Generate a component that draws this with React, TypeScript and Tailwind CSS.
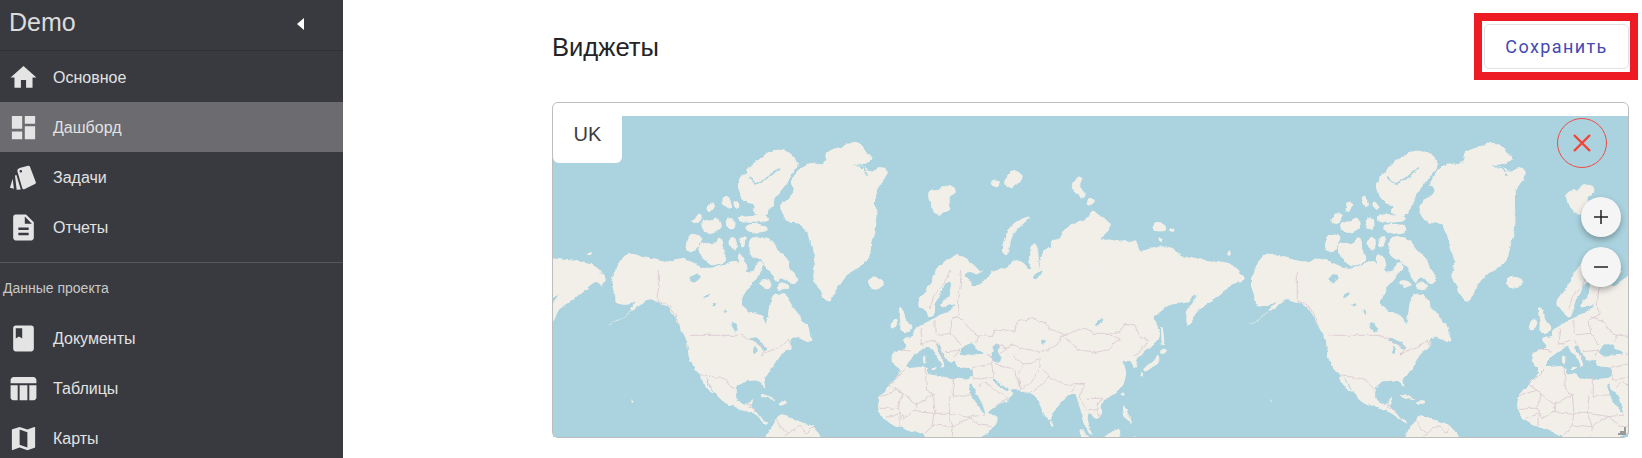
import type { ReactNode } from "react";

const LAND = "#f2efe9";
const WATER = "#aad3df";
const BORDER = "#d8c6cf";

// coastlines traced per crop, in 3x crop coordinates
const arcticAmerica = [
  "750,80 785,85 800,110 820,125 805,140 760,150 790,150 815,175 835,150 862,165 855,190 835,210 825,240 828,290 828,340 815,380 805,430 770,460 730,480 715,510 645,510 640,470 650,440 640,410 625,350 605,320 565,320 545,290 540,265 575,240 590,215 570,205 585,180 605,150 640,140 665,150 680,130 670,115 710,100",
  "520,100 560,105 585,125 600,145 575,175 550,215 520,250 510,290 490,300 455,290 470,265 440,265 420,235 412,200 430,170 440,180 440,155 490,125",
  "375,235 395,260 385,280 365,255",
  "405,255 420,270 410,280 400,265",
  "330,255 345,262 330,290 318,280",
  "295,288 310,295 300,320 272,318",
  "305,315 340,320 350,300 365,330 350,345 320,352 305,335",
  "375,305 405,305 405,340 385,340",
  "415,300 440,300 500,295 505,315 445,320 415,315",
  "435,325 495,325 500,350 440,352",
  "270,352 305,360 300,380 280,410 262,405 258,380",
  "300,380 345,385 355,365 370,375 365,400 385,435 345,450 320,440 295,405",
  "385,365 410,365 408,405 390,400",
  "420,362 443,362 430,395 420,390",
  "450,370 470,362 515,368 530,400 565,430 570,460 595,490 580,505 540,480 530,505 505,450 480,430 450,420",
  "415,405 435,430 440,470 415,460",
  "40,490 60,430 90,410 130,425 175,435 205,440 240,425 290,445 320,460 370,450 410,430 425,465 465,470 470,440 495,440 480,470 465,492 445,510 30,510",
  "0,475 15,485 5,505 0,505",
];

const northAmerica = [
  "640,0 750,0 725,30 700,70 690,98 670,85 650,40",
  "45,0 470,0 465,30 430,70 420,100 445,125 490,135 500,175 510,130 515,75 555,70 575,110 610,150 628,175 625,190 645,215 615,210 590,195 565,210 580,235 550,240 520,290 500,320 490,330 498,358 480,330 445,330 410,345 405,385 420,400 440,405 455,385 460,385 445,410 462,415 480,445 505,460 490,460 470,435 440,420 410,412 370,395 340,365 325,330 305,315 285,300 265,260 265,215 245,180 225,140 200,105 175,95 140,85 115,110 85,125 100,110 120,85 80,110 45,100 50,80 33,40",
  "303,315 312,320 330,355 342,372 325,360 310,335",
  "478,375 495,372 530,392 510,385",
  "535,395 560,395 555,403 535,402",
  "95,390 100,396 96,398",
  "500,500 530,445 545,435 570,445 600,455 640,470 662,500 662,520 500,520",
  "800,30 820,22 850,30 850,45 825,58 805,45",
  "480,30 515,35 510,55 485,50",
  "535,35 570,45 560,60 530,58",
];

const northAmericaLakes = [
  "445,205 470,205 490,225 500,235 490,245 480,220 460,215",
  "462,225 470,235 466,252 460,250",
  "265,25 295,12 300,25 280,40",
  "305,85 335,65 325,80",
  "335,105 350,100 345,110",
  "390,160 410,165 412,185 400,180",
  "375,115 382,130 376,132",
];

const northAmericaBorders = [
  "175,0 175,95 200,100 225,135 240,170",
  "270,196 420,196 445,205 490,230 495,240 483,255 520,238 550,225 565,210 575,232",
  "305,318 355,322 385,335 405,358",
  "435,405 450,400 445,415 462,415 470,430",
  "530,445 545,475 565,490 600,465 620,490 640,470",
  "550,500 565,490",
];

const arcticEurasia = [
  "143,225 175,225 190,205 230,212 225,232 200,240 213,288 195,285 175,305 150,265",
  "330,195 360,190 355,215 340,210",
  "380,180 400,160 435,180 405,215 370,210",
  "450,300 445,315 410,335 390,370 385,420 365,410 372,370 395,325 425,310",
  "590,178 605,190 600,215 620,240 600,250 575,220",
  "628,238 650,260 618,275",
  "817,320 860,325 860,345 820,345",
  "865,335 888,345 870,347",
  "835,362 850,375 840,378",
  "1040,415 1050,405 1052,420",
  "145,510 175,450 225,415 250,425 305,470 280,490 300,510",
  "300,510 320,480 390,450 405,430 440,445 450,490 460,480 445,420 460,375 475,400 475,480 490,395 520,400 515,375 545,365 545,345 600,315 625,310 640,280 660,300 690,320 690,345 650,375 700,370 745,380 770,370 775,405 790,410 840,390 880,395 900,420 940,430 990,435 1050,440 1085,470 1060,495 1050,510",
];

const eurasiaAfrica = [
  "1050,0 1090,15 1095,30 1060,40 1050,45 1000,88 965,105 950,130 920,180 915,125 958,72 945,75 915,100 870,100 840,125 810,150 838,165 840,205 800,240 770,262 765,302 755,275 735,268 718,280 720,265 740,300 733,340 700,375 670,385 660,405 668,435 645,450 625,425 620,445 630,480 640,500 610,465 605,420 590,385 575,365 530,410 505,455 490,425 475,385 455,370 420,358 385,360 403,375 375,395 345,410 318,432 358,435 340,470 305,510 140,510 135,497 60,470 20,455 -5,425 -3,380 30,345 70,300 40,285 38,245 80,240 85,225 65,205 105,200 95,185 125,165 165,145 185,135 205,125 235,100 205,105 180,115 195,85 215,30 195,35 185,70 158,105 165,120 148,148 135,120 115,110 118,85 150,50 175,0",
];

const eurasiaWater = [
  "78,290 100,258 130,240 148,228 170,262 185,285 180,300 140,295 135,285 85,290",
  "145,290 190,295 195,290 190,265 165,225 175,225 210,285 225,265 232,295 280,295 275,322 240,325 190,325 170,310 140,310",
  "240,245 255,225 290,220 280,235 320,250 290,250 250,258",
  "335,225 360,220 350,240 365,275 345,278 335,255 345,240",
  "268,335 285,365 305,400 315,430 308,425 285,395 265,350",
  "340,330 360,350 385,362 385,355 378,355 358,340 345,325",
  "250,15 275,30 275,50 300,40 340,5 320,0 290,15 270,5",
  "460,20 480,0 485,0 470,25",
  "478,210 500,212 490,222",
  "640,170 670,140 665,160",
  "190,50 215,28 205,85 185,90",
];

const eurasiaIslands = [
  "130,258 138,258 138,280 130,280",
  "155,292 175,292 165,300",
  "55,110 70,115 75,150 95,170 90,185 60,190 65,165",
  "35,150 55,145 50,175 32,178",
  "510,448 522,455 518,468 510,465",
  "730,362 735,375 725,378",
  "845,160 853,215 848,230 845,200",
  "845,235 860,240 845,255",
  "835,250 838,280 800,305 785,300 825,270",
  "780,305 790,310 785,322",
  "728,400 745,430 755,465 735,450",
  "595,470 625,500 640,515 610,515",
  "665,510 710,470 720,490 720,515",
  "765,495 775,515 760,515",
];

const eurasiaBorders = [
  "55,240 95,243",
  "125,175 120,215 135,225",
  "165,150 165,190",
  "210,150 215,190 170,195",
  "215,140 250,150 270,180 295,195 290,215",
  "215,190 240,225",
  "120,220 165,210 175,222",
  "175,222 195,270",
  "195,245 240,240 225,258",
  "245,0 240,50 235,100 238,135 210,150",
  "210,0 190,45 160,80 150,115",
  "320,250 345,265 335,280 275,295 280,330",
  "295,195 335,200 345,180 400,185 415,155 460,145 495,155 510,180 550,195",
  "345,225 385,230 395,225 430,240 470,245 505,240 530,225 550,195",
  "550,195 580,185 610,175 640,190 680,190 720,185 735,160 765,165 780,200 805,210 790,235 760,260",
  "555,200 590,235 640,250 690,235 720,210 680,190",
  "345,280 365,290 395,295 410,320 420,355",
  "395,255 430,285 415,310 420,355",
  "430,285 480,265 480,290 455,340 420,355",
  "350,255 385,230",
  "480,290 510,320 455,370",
  "510,320 555,345 590,340 610,345",
  "575,365 590,345 610,345 600,385 620,420",
  "620,385 665,385 650,410 660,440",
  "625,420 650,415",
  "280,330 340,320 335,280",
  "310,335 385,385 345,410",
  "305,340 295,350",
  "0,380 55,360 110,405",
  "75,300 30,345 60,365",
  "135,290 140,360 165,375",
  "220,315 220,378 275,378",
  "210,378 205,430 270,440 315,435",
  "110,400 160,375 165,430 205,430",
  "105,425 165,430 160,465 135,495",
  "0,415 55,415 65,365",
  "55,415 70,445 105,425 110,395",
  "20,445 60,430 60,470",
  "270,440 300,465 335,470",
  "205,430 220,470 270,440",
  "160,465 220,470 215,510",
];

function CropFrame({ x, y, children }: { x: number; y: number; children: ReactNode }) {
  return <g transform={`translate(${x} ${y}) scale(0.3333)`}>{children}</g>;
}

// rounds the traced corners so coasts don't look like polygons
function smoothPath(points: string) {
  const pts = points.split(" ").map((p) => p.split(",").map(Number));
  const mid = (a: number[], b: number[]) => `${(a[0] + b[0]) / 2} ${(a[1] + b[1]) / 2}`;
  let d = `M${mid(pts[pts.length - 1], pts[0])}`;
  pts.forEach((p, i) => {
    d += `Q${p[0]} ${p[1]} ${mid(p, pts[(i + 1) % pts.length])}`;
  });
  return d + "z";
}

function Shapes({ points, fill }: { points: string[]; fill: string }) {
  return (
    <>
      {points.map((p) => (
        <path key={p} d={smoothPath(p)} fill={fill} stroke={fill} strokeWidth={3} />
      ))}
    </>
  );
}

function Lines({ points }: { points: string[] }) {
  return (
    <>
      {points.map((p) => (
        <polyline key={p} points={p} fill="none" stroke={BORDER} strokeWidth={2.4} />
      ))}
    </>
  );
}

function WorldMap() {
  return (
    <svg viewBox="553 116 1075 321" className="block h-full w-full">
      <defs>
        <filter id="rough" filterUnits="userSpaceOnUse" x={540} y={100} width={1100} height={350}>
          <feTurbulence type="fractalNoise" baseFrequency={0.11} numOctaves={3} seed={4} result="noise" />
          <feDisplacementMap in="SourceGraphic" in2="noise" scale={5} xChannelSelector="R" yChannelSelector="G" />
          <feGaussianBlur stdDeviation={0.35} />
        </filter>
        <g id="world">
          <CropFrame x={600} y={116}>
            <Shapes points={arcticAmerica} fill={LAND} />
            <polyline points="445,185 470,205 510,180 540,155" fill="none" stroke={WATER} strokeWidth={5} />
            <polyline points="760,150 790,155 805,180" fill="none" stroke={WATER} strokeWidth={4} />
          </CropFrame>
          <CropFrame x={600} y={270}>
            <Shapes points={northAmerica} fill={LAND} />
            <Shapes points={northAmericaLakes} fill={WATER} />
            <polyline points="30,165 70,140 105,110" fill="none" stroke={LAND} strokeWidth={2} />
            <Lines points={northAmericaBorders} />
          </CropFrame>
          <CropFrame x={880} y={116}>
            <Shapes points={arcticEurasia} fill={LAND} />
          </CropFrame>
          <CropFrame x={880} y={270}>
            <Shapes points={eurasiaAfrica} fill={LAND} />
            <Shapes points={eurasiaWater} fill={WATER} />
            <Shapes points={eurasiaIslands} fill={LAND} />
            <Lines points={eurasiaBorders} />
          </CropFrame>
        </g>
      </defs>
      <g filter="url(#rough)">
        <use href="#world" x={-639} />
        <use href="#world" />
        <use href="#world" x={639} />
      </g>
    </svg>
  );
}

const iconPaths = {
  home: "M10 20v-6h4v6h5v-8h3L12 3 2 12h3v8z",
  dashboard: "M3 13h8V3H3v10zm0 8h8v-6H3v6zm10 0h8V11h-8v10zm0-18v6h8V3h-8z",
  tasks:
    "M9 4.700L15.500 2.900Q16.600 2.600 17 3.700L21.500 15.500Q21.900 16.600 20.900 17.100L12.600 21Q11.500 21.500 11.100 20.400L7.200 7Q6.900 5.400 9 4.700zM9.900 6.200a1 1 0 1 0 .1 2 1 1 0 0 0-.1-2zM5.400 10.500L6.500 10.100L9.900 21.200L6.700 21.500zM3.600 13L4.600 20.800L1.500 20z",
  report:
    "M14 2H6c-1.100 0-2 .9-2 2v16c0 1.100.9 2 2 2h12c1.100 0 2-.9 2-2V8l-6-6zm2 16H8v-2h8v2zm0-4H8v-2h8v2zm-3-5V3.500L18.500 9H13z",
  book: "M18 2H6c-1.100 0-2 .9-2 2v16c0 1.100.9 2 2 2h12c1.100 0 2-.9 2-2V4c0-1.100-.9-2-2-2zM6 4h5v8l-2.500-1.500L6 12V4z",
  table:
    "M4.500 3h15C20.900 3 22 4.100 22 5.400V8H2V5.400C2 4.100 3.100 3 4.500 3zM2 9.500h5.500V21H4c-1.100 0-2-.9-2-2zM9 9.500h6V21H9zM16.500 9.500H22V19c0 1.100-.9 2-2 2h-3.500z",
  map: "M20.500 3l-.16.03L15 5.100 9 3 3.360 4.900c-.21.07-.36.25-.36.48V20.500c0 .28.22.5.5.5l.16-.03L9 18.900l6 2.100 5.640-1.900c.21-.07.36-.25.36-.48V3.500c0-.28-.22-.5-.5-.5zM15 19l-6-2.110V5l6 2.110V19z",
};

function NavItem({ icon, label, active }: { icon: keyof typeof iconPaths; label: string; active?: boolean }) {
  return (
    <div className={active ? "flex h-[50px] items-center bg-[#6b6b70] pl-[8px]" : "flex h-[50px] items-center pl-[8px]"}>
      <svg viewBox="0 0 24 24" className="h-[31px] w-[31px] fill-[#e4e4e4]">
        <path fillRule="evenodd" d={iconPaths[icon]} />
      </svg>
      <span className="ml-[14px] mt-[2px] text-[16px] text-[#e2e2e2]">{label}</span>
    </div>
  );
}

export default function App() {
  return (
    <div className="flex h-screen overflow-hidden bg-white font-['Liberation_Sans',Arial,sans-serif]">
      <aside className="w-[343px] shrink-0 overflow-hidden bg-[#393a40]">
        <div className="flex h-[51px] items-center justify-between border-b border-[#2f3035] pb-[5px] pl-[9px] pr-[39px]">
          <span className="text-[25px] text-[#dcdcdc]">Demo</span>
          <span className="mt-[2px] h-0 w-0 border-y-[6px] border-r-[7px] border-y-transparent border-r-white" />
        </div>
        <nav className="pt-px">
          <NavItem icon="home" label="Основное" />
          <NavItem icon="dashboard" label="Дашборд" active />
          <NavItem icon="tasks" label="Задачи" />
          <NavItem icon="report" label="Отчеты" />
        </nav>
        <div className="mt-[10px] border-t border-[#55565b]" />
        <div className="flex h-[50px] items-center pl-[3px] text-[14px] text-[#c8c8c8]">Данные проекта</div>
        <nav>
          <NavItem icon="book" label="Документы" />
          <NavItem icon="table" label="Таблицы" />
          <NavItem icon="map" label="Карты" />
        </nav>
      </aside>

      <main className="min-w-0 flex-1 pl-[209px] pr-[13px] pt-[13px]">
        <div className="mr-[-9px] flex items-center justify-between">
          <h1 className="pt-[2px] text-[25.6px] text-[#222428]">Виджеты</h1>
          <div className="h-[67px] w-[164px] border-[8px] border-[#ed1c24] pl-[2px] pt-[3px]">
            <button
              type="button"
              className="h-[45px] w-[145px] rounded-[5px] border border-[#e2e2e6] font-['Roboto',sans-serif] text-[18px] tracking-[1.4px] text-[#4349b2]"
            >
              Сохранить
            </button>
          </div>
        </div>

        <section className="relative mt-[22px] h-[336px] rounded-[6px] border border-[#bdbdbd] pb-px pt-[13px]">
          <div className="h-[321px] overflow-hidden bg-[#aad3df]">
            <WorldMap />
          </div>

          <div className="absolute left-0 top-0 flex h-[60px] w-[69px] items-center justify-center rounded-[6px] bg-white pt-[2px] text-[20px] text-[#3c3c3c]">
            UK
          </div>

          <button
            type="button"
            className="absolute right-[21px] top-[15px] flex h-[50px] w-[50px] items-center justify-center rounded-full border border-[#ef4a44]"
          >
            <svg viewBox="0 0 20 20" className="h-[20px] w-[20px] stroke-[#f44336] stroke-[2.4]">
              <path d="M2 2l16 16M18 2L2 18" />
            </svg>
          </button>

          <button
            type="button"
            className="absolute right-[7px] top-[94px] flex h-[40px] w-[40px] items-center justify-center rounded-full bg-[#f5f5f5] shadow-[0_3px_6px_rgba(0,0,0,0.3)]"
          >
            <svg viewBox="0 0 14 14" className="h-[14px] w-[14px] stroke-[#222] stroke-[1.5]">
              <path d="M0 7h14M7 0v14" />
            </svg>
          </button>
          <button
            type="button"
            className="absolute right-[7px] top-[144px] flex h-[40px] w-[40px] items-center justify-center rounded-full bg-[#f5f5f5] shadow-[0_3px_6px_rgba(0,0,0,0.3)]"
          >
            <svg viewBox="0 0 14 14" className="h-[14px] w-[14px] stroke-[#222] stroke-[1.5]">
              <path d="M0 7h14" />
            </svg>
          </button>

          <svg viewBox="0 0 8 8" className="absolute bottom-[2px] right-[2px] h-[8px] w-[8px] fill-[#9a9a9a]">
            <path d="M6 0h2v8H0V6h2V4h4z" />
          </svg>
        </section>
      </main>
    </div>
  );
}
